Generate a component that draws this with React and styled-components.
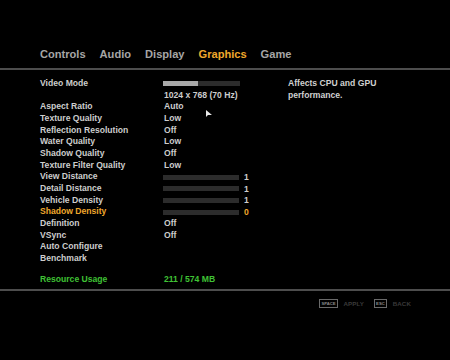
import React from "react";
import styled, { createGlobalStyle } from "styled-components";

const Global = createGlobalStyle`
  html, body { margin: 0; padding: 0; background: #000; }
  body { font-family: "Liberation Sans", Arial, sans-serif; }
`;

const Screen = styled.div`
  position: relative;
  width: 450px;
  height: 360px;
  background: #000;
  overflow: hidden;
  display: flex;
  flex-direction: column;
`;

const Tabs = styled.nav`
  display: flex;
  gap: 14px;
  padding: 46px 0 0 40px;
  height: 22px;
  border-bottom: 2px solid #4d4d4d;
`;

const Tab = styled.span`
  font-size: 11.1px;
  font-weight: bold;
  line-height: 16px;
  color: ${(p) => (p.$active ? "#f0a82c" : "#a6a6a6")};
`;

const Body = styled.div`
  display: flex;
  height: 221px;
  padding: 8px 0 0 40px;
  box-sizing: border-box;
  border-bottom: 2px solid #4d4d4d;
`;

const Column = styled.div`
  display: flex;
  flex-direction: column;
  gap: 9.3px;
`;

const Settings = styled.div`
  display: grid;
  grid-template-columns: 123px 125px;
  grid-auto-rows: 11.67px;
  align-items: center;
`;

const Label = styled.div`
  font-size: 8.6px;
  font-weight: bold;
  line-height: 11.67px;
  white-space: nowrap;
  color: ${(p) => p.$color || "#cdcdcd"};
`;

const Value = styled(Label)`
  padding-left: 1px;
`;

const SliderCell = styled.div`
  display: flex;
  align-items: center;
  gap: 5px;
  height: 11.67px;
`;

const Track = styled.div`
  width: ${(p) => p.$w}px;
  height: 5px;
  background: #2c2c2c;
  display: flex;
`;

const Fill = styled.div`
  height: 100%;
  background: #a9a9a9;
`;

const SliderNum = styled.span`
  font-size: 8.6px;
  font-weight: bold;
  color: ${(p) => p.$color || "#cdcdcd"};
`;

const Description = styled.p`
  margin: 0;
  width: 110px;
  font-size: 8.6px;
  font-weight: bold;
  line-height: 11.67px;
  color: #d0d0d0;
`;

const Footer = styled.div`
  display: flex;
  justify-content: flex-end;
  align-items: center;
  gap: 10px;
  padding: 8px 39px 0 0;
`;

const Hint = styled.div`
  display: flex;
  align-items: center;
  gap: 6px;
`;

const Key = styled.span`
  font-size: 4.2px;
  font-weight: bold;
  color: #8a8a8a;
  border: 1px solid #6a6a6a;
  padding: 1px 1px;
  line-height: 5px;
`;

const HintText = styled.span`
  font-size: 6.2px;
  font-weight: bold;
  color: #3a3a3a;
  letter-spacing: 0.1px;
`;

const Cursor = styled.svg`
  position: absolute;
  left: 205px;
  top: 109px;
`;

const tabs = ["Controls", "Audio", "Display", "Graphics", "Game"];

const Slider = ({ value, color }) => (
  <SliderCell>
    <Track $w={76} />
    <SliderNum $color={color}>{value}</SliderNum>
  </SliderCell>
);

export default function App() {
  const rows = [
    ["Aspect Ratio", "Auto"],
    ["Texture Quality", "Low"],
    ["Reflection Resolution", "Off"],
    ["Water Quality", "Low"],
    ["Shadow Quality", "Off"],
    ["Texture Filter Quality", "Low"],
  ];
  const sliders = [
    ["View Distance", "1"],
    ["Detail Distance", "1"],
    ["Vehicle Density", "1"],
    ["Shadow Density", "0", "#f0a82c"],
  ];
  return (
    <>
      <Global />
      <Screen>
        <Tabs>
          {tabs.map((t) => (
            <Tab key={t} $active={t === "Graphics"}>
              {t}
            </Tab>
          ))}
        </Tabs>
        <Body>
          <Column>
            <Settings>
              <Label>Video Mode</Label>
              <SliderCell>
                <Track $w={77}>
                  <Fill style={{ width: "35px" }} />
                </Track>
              </SliderCell>
              <div />
              <Value>1024 x 768 (70 Hz)</Value>
              {rows.map(([l, v]) => (
                <React.Fragment key={l}>
                  <Label>{l}</Label>
                  <Value>{v}</Value>
                </React.Fragment>
              ))}
              {sliders.map(([l, v, c]) => (
                <React.Fragment key={l}>
                  <Label $color={c}>{l}</Label>
                  <Slider value={v} color={c} />
                </React.Fragment>
              ))}
              <Label>Definition</Label>
              <Value>Off</Value>
              <Label>VSync</Label>
              <Value>Off</Value>
              <Label>Auto Configure</Label>
              <div />
              <Label>Benchmark</Label>
              <div />
            </Settings>
            <Settings>
              <Label $color="#3fc234">Resource Usage</Label>
              <Value $color="#3fc234">211 / 574 MB</Value>
            </Settings>
          </Column>
          <Description>Affects CPU and GPU performance.</Description>
        </Body>
        <Footer>
          <Hint>
            <Key>SPACE</Key>
            <HintText>APPLY</HintText>
          </Hint>
          <Hint>
            <Key>ESC</Key>
            <HintText>BACK</HintText>
          </Hint>
        </Footer>
        <Cursor width="8" height="9" viewBox="0 0 8 9">
          <path d="M1 1 L1 8 L3 6 L7 6 Z" fill="#e8e8e8" />
        </Cursor>
      </Screen>
    </>
  );
}
